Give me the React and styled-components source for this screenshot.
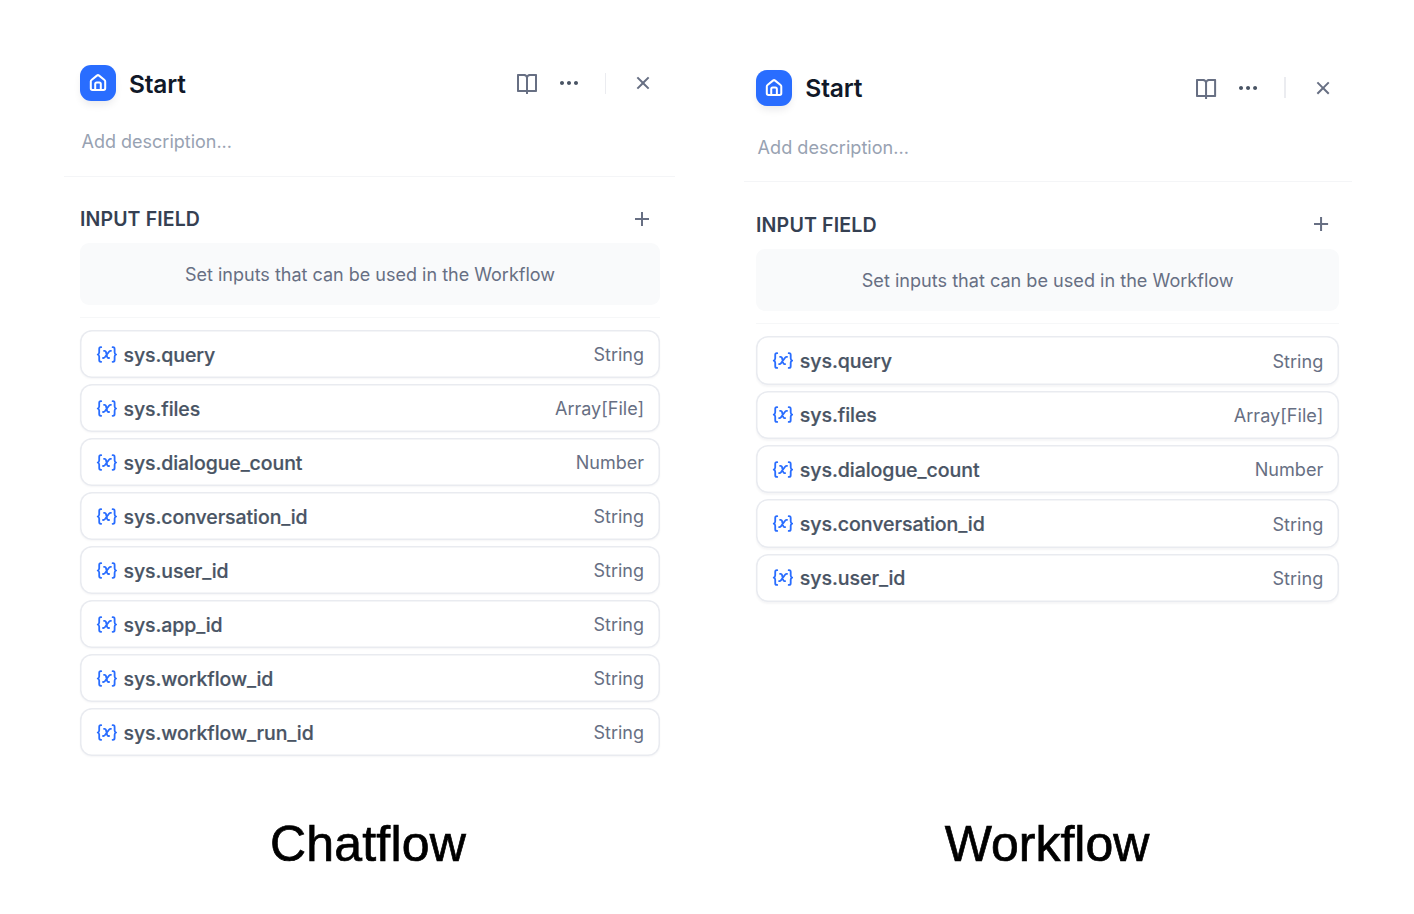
import React from "react";
import styled, { createGlobalStyle } from "styled-components";
import { RiBookOpenLine, RiMoreFill, RiCloseLine, RiAddLine } from "react-icons/ri";

const GlobalStyle = createGlobalStyle`
  * { box-sizing: border-box; }
  body { margin: 0; background: #fff; font-family: Inter, "Liberation Sans", sans-serif; }
`;

const Page = styled.main`
  width: 1414px;
  height: 914px;
  display: flex;
  align-items: flex-start;
  background: #fff;
  overflow: hidden;
`;

const Column = styled.section`
  width: 707px;
  height: 914px;
  padding: ${(p) => p.$top}px 0 40px ${(p) => p.$left}px;
  display: flex;
  flex-direction: column;
  justify-content: space-between;
`;

const Panel = styled.div`
  width: 611px;
  zoom: ${(p) => p.$scale};
`;

const Header = styled.header`
  height: 112px;
  margin: 0 ${(p) => p.$inset * 0.75}px 0 ${(p) => p.$inset}px;
  padding: 0 ${(p) => 20 - p.$inset}px 0 ${(p) => 16 - p.$inset}px;
  border-bottom: 1px solid #f4f5f7;
`;

const TitleRow = styled.div`
  height: 36px;
  display: flex;
  align-items: center;
`;

const NodeIcon = styled.span`
  width: 36px;
  height: 36px;
  border-radius: 11px;
  background: #296dff;
  box-shadow: 0 5px 8px -2px rgba(16, 24, 40, 0.1);
  display: grid;
  place-items: center;
`;

const Title = styled.h2`
  margin: 0 auto 0 13px;
  padding-top: 1px;
  font-size: 24.5px;
  line-height: 36px;
  font-weight: 600;
  letter-spacing: -0.2px;
  color: #101828;
`;

const Actions = styled.div`
  display: flex;
  align-items: center;
  color: #676f83;
  svg { width: 24px; height: 24px; display: block; }
`;

const Separator = styled.i`
  width: 1.5px;
  height: 21px;
  margin: 0 25px 0 24px;
  background: #ebecf0;
`;

const Dots = styled.span`
  margin-left: 18px;
  color: #495464;
`;

const Description = styled.p`
  margin: 29px 0 0 1.5px;
  font-size: 18px;
  line-height: 24px;
  color: #98a2b2;
`;

const Body = styled.div`
  padding: 30px 15px 0 16px;
`;

const SectionHead = styled.div`
  height: 24px;
  padding-right: 6px;
  display: flex;
  align-items: center;
  justify-content: space-between;
  color: #676f83;
  svg { width: 24px; height: 24px; }
`;

const SectionTitle = styled.h3`
  margin: 0;
  padding-top: 0.5px;
  font-size: 19.5px;
  line-height: 24px;
  font-weight: 600;
  letter-spacing: 0.12px;
  color: #354052;
`;

const EmptyHint = styled.div`
  height: 62px;
  margin-top: 12px;
  border-radius: 9px;
  background: #f9fafb;
  display: grid;
  place-items: center;
  font-size: 18px;
  color: #676f83;
`;

const Rule = styled.div`
  height: 1px;
  margin: 12px 0 12.4px;
  background: #f6f7f8;
`;

const VariableList = styled.div`
  display: grid;
  gap: 6px;
`;

const VariableRow = styled.div`
  height: 48px;
  padding: 0 16px;
  border-radius: 12px;
  box-shadow: inset 0 0 0 1.5px #e9ebf0, 0 1px 2px rgba(16, 24, 40, 0.04);
  display: flex;
  align-items: center;
  svg { margin-top: 1px; }
`;

const VariableName = styled.span`
  margin: 0 auto 0 6.5px;
  padding-top: 1px;
  font-size: 19.5px;
  font-weight: 500;
  letter-spacing: -0.08px;
  -webkit-text-stroke: 0.2px currentColor;
  color: #495464;
`;

const VariableType = styled.span`
  font-size: 18px;
  color: #676f83;
`;

const Caption = styled.h1`
  margin: 0;
  width: ${(p) => p.$width}px;
  text-align: center;
  font: 400 50px/60px "Liberation Sans", Arial, sans-serif;
  letter-spacing: ${(p) => p.$tracking}px;
  -webkit-text-stroke: 0.7px #000;
  color: #000;
`;

const HomeGlyph = () => (
  <svg width="18" height="18" viewBox="0 0 18 18" fill="none" stroke="#fff" strokeWidth="2" strokeLinejoin="round" strokeLinecap="round">
    <path d="M1.8 7.4c0-.6.25-1.05.7-1.4l5.4-4.4c.65-.53 1.55-.53 2.2 0L15.5 6c.45.35.7.8.7 1.4V14.3c0 1-.7 1.7-1.7 1.7h-11C2.500 16 1.800 15.3 1.800 14.3Z" />
    <path d="M6.2 15.800V10c0-.9.6-1.500 1.500-1.500h2.600c.9 0 1.500.6 1.500 1.500v5.800" />
  </svg>
);

const VariableGlyph = () => (
  <svg width="21" height="18" viewBox="0 0 21 18" fill="none" stroke="#296dff" strokeWidth="1.8" strokeLinecap="round" strokeLinejoin="round">
    <path d="M5.200 1.200H4.800C3.700 1.200 3.200 1.900 3.200 2.900v3.300c0 1.300-.5 2-1.500 2.300 1 .3 1.500 1 1.500 2.300v3.300c0 1 .5 1.700 1.600 1.700H5.200" />
    <path d="M16.600 1.200h.4c1.100 0 1.600.7 1.600 1.700v3.300c0 1.300.5 2 1.500 2.300-1 .3-1.500 1-1.500 2.300v3.300c0 1-.5 1.700-1.600 1.700H16.600" />
    <path d="M8 4.800h.6c.7 0 1.100.3 1.300 1l1.300 5.200c.2.700.6 1 1.200 1h.7M15 4.800h-.4c-.6 0-1 .2-1.400.7l-4.400 5.800c-.4.500-.8.7-1.400.7H7" />
  </svg>
);

const types = { "sys.files": "Array[File]", "sys.dialogue_count": "Number" };
const workflowVars = ["sys.query", "sys.files", "sys.dialogue_count", "sys.conversation_id", "sys.user_id"];
const chatflowVars = [...workflowVars, "sys.app_id", "sys.workflow_id", "sys.workflow_run_id"];

const StartPanel = ({ scale, inset = 0, variables }) => (
  <Panel $scale={scale}>
    <Header $inset={inset}>
      <TitleRow>
        <NodeIcon><HomeGlyph /></NodeIcon>
        <Title>Start</Title>
        <Actions>
          <RiBookOpenLine />
          <Dots><RiMoreFill /></Dots>
          <Separator />
          <RiCloseLine />
        </Actions>
      </TitleRow>
      <Description>Add description...</Description>
    </Header>
    <Body>
      <SectionHead>
        <SectionTitle>INPUT FIELD</SectionTitle>
        <RiAddLine />
      </SectionHead>
      <EmptyHint>Set inputs that can be used in the Workflow</EmptyHint>
      <Rule />
      <VariableList>
        {variables.map((name) => (
          <VariableRow key={name}>
            <VariableGlyph />
            <VariableName>{name}</VariableName>
            <VariableType>{types[name] || "String"}</VariableType>
          </VariableRow>
        ))}
      </VariableList>
    </Body>
  </Panel>
);

export default function App() {
  return (
    <>
      <GlobalStyle />
      <Page>
        <Column $left={64} $top={65}>
          <StartPanel scale={1} variables={chatflowVars} />
          <Caption $width={608} $tracking={0.2}>Chatflow</Caption>
        </Column>
        <Column $left={33} $top={69.65}>
          <StartPanel scale={1.0056} inset={3.5} variables={workflowVars} />
          <Caption $width={614} $tracking={0}>Workflow</Caption>
        </Column>
      </Page>
    </>
  );
}
